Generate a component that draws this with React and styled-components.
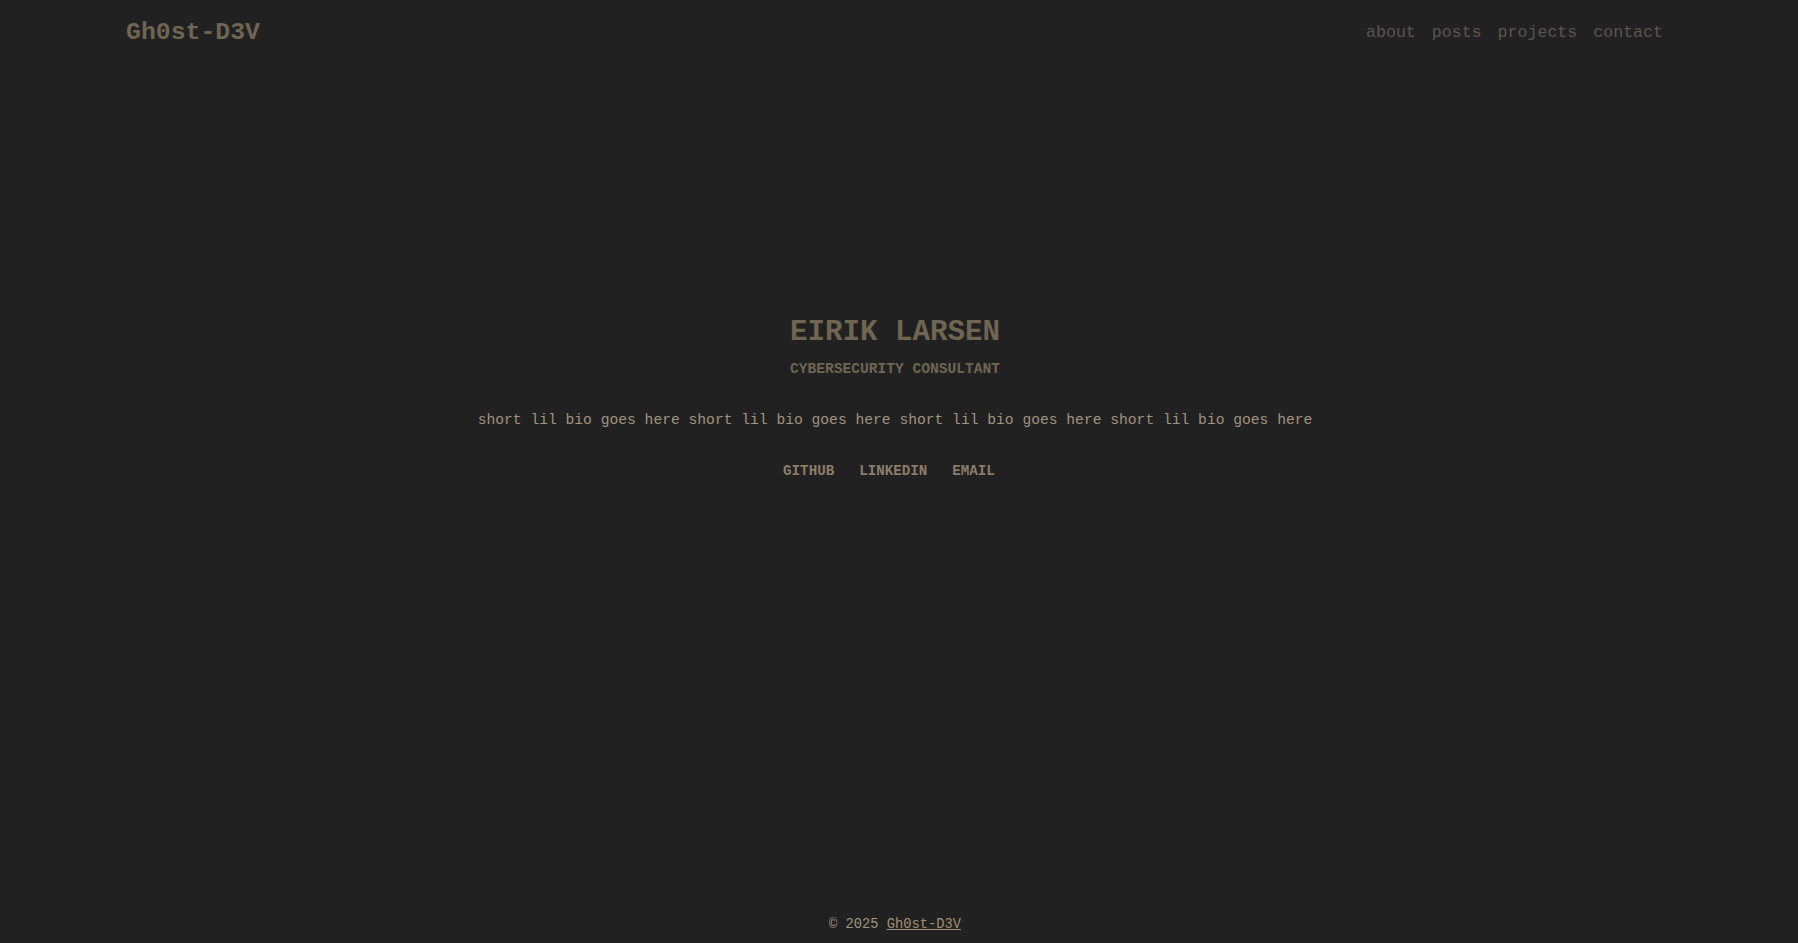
import React from 'react';
import styled, { createGlobalStyle } from 'styled-components';

const GlobalStyle = createGlobalStyle`
    html, body {
        margin: 0;
        padding: 0;
        background: #212121;
    }
    body {
        font-family: "Liberation Mono", "DejaVu Sans Mono", monospace;
    }
`;

const Page = styled.div`
    min-height: 100vh;
    padding-right: 8px;
    box-sizing: border-box;
    display: flex;
    flex-direction: column;
    background: #212121;
`;

const Header = styled.header`
    height: 64px;
    padding: 0 127px 0 126px;
    display: flex;
    align-items: center;
    justify-content: space-between;
`;

const Logo = styled.a`
    font-size: 24.8px;
    font-weight: bold;
    color: #6f6553;
    text-decoration: none;
`;

const Nav = styled.nav`
    display: flex;
    gap: 16px;
`;

const NavLink = styled.a`
    font-size: 16.6px;
    color: #5b564d;
    text-decoration: none;
`;

const Main = styled.main`
    flex: 1;
    padding-top: 251px;
    display: flex;
    flex-direction: column;
    align-items: center;
    text-align: center;
`;

const Name = styled.h1`
    margin: 0;
    font-size: 29.2px;
    line-height: 35px;
    font-weight: bold;
    color: #6f6553;
`;

const Role = styled.h2`
    margin: 10px 0 0;
    font-size: 14.6px;
    line-height: 18px;
    font-weight: bold;
    color: #6f6553;
`;

const Bio = styled.p`
    margin: 29px 0 0;
    font-size: 14.65px;
    line-height: 26px;
    color: #a09380;
`;

const Links = styled.div`
    margin-top: 30px;
    padding-right: 12px;
    display: flex;
    gap: 25px;
`;

const SocialLink = styled.a`
    font-size: 14.2px;
    line-height: 17px;
    font-weight: bold;
    color: #8c7d69;
    text-decoration: none;
`;

const Footer = styled.footer`
    padding: 0 0 8px;
    text-align: center;
    font-size: 13.75px;
    line-height: 21px;
    color: #a09484;

    a {
        color: #a38f73;
        text-decoration: underline;
    }
`;

const navItems = ['about', 'posts', 'projects', 'contact'];
const socials = ['GITHUB', 'LINKEDIN', 'EMAIL'];

function App() {
    return (
        <Page>
            <GlobalStyle />
            <Header>
                <Logo href="#">Gh0st-D3V</Logo>
                <Nav>
                    {navItems.map((item) => (
                        <NavLink key={item} href="#">{item}</NavLink>
                    ))}
                </Nav>
            </Header>
            <Main>
                <Name>EIRIK LARSEN</Name>
                <Role>CYBERSECURITY CONSULTANT</Role>
                <Bio>
                    short lil bio goes here short lil bio goes here short lil bio goes here short lil bio goes here
                </Bio>
                <Links>
                    {socials.map((s) => (
                        <SocialLink key={s} href="#">{s}</SocialLink>
                    ))}
                </Links>
            </Main>
            <Footer>
                © 2025 <a href="#">Gh0st-D3V</a>
            </Footer>
        </Page>
    );
}

export default App;
